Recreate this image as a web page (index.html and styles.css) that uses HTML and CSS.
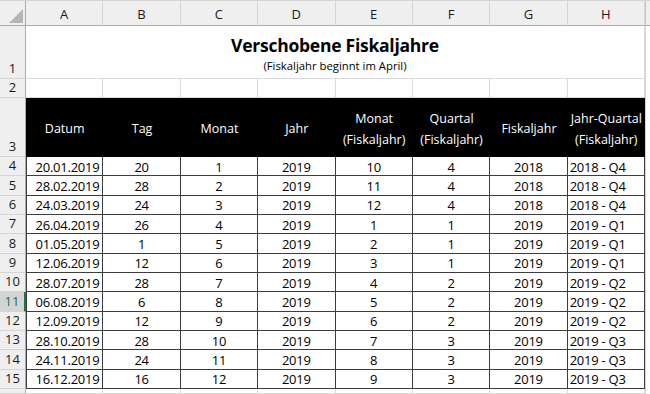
FILE: index.html
```html
<!DOCTYPE html>
<html lang="de">
<head>
<meta charset="utf-8">
<title>Verschobene Fiskaljahre</title>
<link rel="stylesheet" href="styles.css">
</head>
<body>
<div class="sheet">
  <div class="ch corner"><span class="tri"></span></div>
  <div class="ch">A</div><div class="ch">B</div><div class="ch">C</div><div class="ch">D</div>
  <div class="ch">E</div><div class="ch">F</div><div class="ch">G</div><div class="ch">H</div>
  <div class="ch fill"></div>

  <div class="rh">1</div>
  <div class="c title-cell">
    <div class="title">Verschobene Fiskaljahre</div>
    <div class="subtitle">(Fiskaljahr beginnt im April)</div>
  </div>
  <div class="fill"></div>

  <div class="rh">2</div>
  <div class="c"></div><div class="c"></div><div class="c"></div><div class="c"></div>
  <div class="c"></div><div class="c"></div><div class="c"></div><div class="c"></div>
  <div class="fill"></div>

  <div class="rh">3</div>
  <div class="h">Datum</div>
  <div class="h">Tag</div>
  <div class="h">Monat</div>
  <div class="h">Jahr</div>
  <div class="h">Monat<br>(Fiskaljahr)</div>
  <div class="h">Quartal<br>(Fiskaljahr)</div>
  <div class="h">Fiskaljahr</div>
  <div class="h">Jahr-Quartal<br>(Fiskaljahr)</div>
  <div class="fill"></div>

  <div class="rh">4</div><div class="d da">20.01.2019</div><div class="d">20</div><div class="d">1</div><div class="d">2019</div><div class="d">10</div><div class="d">4</div><div class="d">2018</div><div class="d dh">2018 - Q4</div><div class="fill"></div>
  <div class="rh">5</div><div class="d da">28.02.2019</div><div class="d">28</div><div class="d">2</div><div class="d">2019</div><div class="d">11</div><div class="d">4</div><div class="d">2018</div><div class="d dh">2018 - Q4</div><div class="fill"></div>
  <div class="rh">6</div><div class="d da">24.03.2019</div><div class="d">24</div><div class="d">3</div><div class="d">2019</div><div class="d">12</div><div class="d">4</div><div class="d">2018</div><div class="d dh">2018 - Q4</div><div class="fill"></div>
  <div class="rh">7</div><div class="d da">26.04.2019</div><div class="d">26</div><div class="d">4</div><div class="d">2019</div><div class="d">1</div><div class="d">1</div><div class="d">2019</div><div class="d dh">2019 - Q1</div><div class="fill"></div>
  <div class="rh">8</div><div class="d da">01.05.2019</div><div class="d">1</div><div class="d">5</div><div class="d">2019</div><div class="d">2</div><div class="d">1</div><div class="d">2019</div><div class="d dh">2019 - Q1</div><div class="fill"></div>
  <div class="rh">9</div><div class="d da">12.06.2019</div><div class="d">12</div><div class="d">6</div><div class="d">2019</div><div class="d">3</div><div class="d">1</div><div class="d">2019</div><div class="d dh">2019 - Q1</div><div class="fill"></div>
  <div class="rh">10</div><div class="d da">28.07.2019</div><div class="d">28</div><div class="d">7</div><div class="d">2019</div><div class="d">4</div><div class="d">2</div><div class="d">2019</div><div class="d dh">2019 - Q2</div><div class="fill"></div>
  <div class="rh sel">11</div><div class="d da">06.08.2019</div><div class="d">6</div><div class="d">8</div><div class="d">2019</div><div class="d">5</div><div class="d">2</div><div class="d">2019</div><div class="d dh">2019 - Q2</div><div class="fill"></div>
  <div class="rh">12</div><div class="d da">12.09.2019</div><div class="d">12</div><div class="d">9</div><div class="d">2019</div><div class="d">6</div><div class="d">2</div><div class="d">2019</div><div class="d dh">2019 - Q2</div><div class="fill"></div>
  <div class="rh">13</div><div class="d da">28.10.2019</div><div class="d">28</div><div class="d">10</div><div class="d">2019</div><div class="d">7</div><div class="d">3</div><div class="d">2019</div><div class="d dh">2019 - Q3</div><div class="fill"></div>
  <div class="rh">14</div><div class="d da">24.11.2019</div><div class="d">24</div><div class="d">11</div><div class="d">2019</div><div class="d">8</div><div class="d">3</div><div class="d">2019</div><div class="d dh">2019 - Q3</div><div class="fill"></div>
  <div class="rh">15</div><div class="d da">16.12.2019</div><div class="d">16</div><div class="d">12</div><div class="d">2019</div><div class="d">9</div><div class="d">3</div><div class="d">2019</div><div class="d dh">2019 - Q3</div><div class="fill"></div>

  <div class="rh"></div>
  <div class="c"></div><div class="c"></div><div class="c"></div><div class="c"></div>
  <div class="c"></div><div class="c"></div><div class="c"></div><div class="c"></div>
  <div class="fill"></div>
</div>
</body>
</html>
```

FILE: styles.css
```css
* { box-sizing: border-box; }

html, body {
  margin: 0;
  padding: 0;
  background: #ffffff;
}

body {
  font-family: "Open Sans", "Liberation Sans", sans-serif;
  color: #000;
  width: 650px;
  height: 394px;
  overflow: hidden;
}

.sheet {
  display: grid;
  grid-template-columns: 26px repeat(8, 77.375px) 5px;
  grid-template-rows: 25px 53px 19px 59px repeat(12, 19.333px) 1fr;
  width: 650px;
  height: 394px;
  border-top: 1px solid #d4d4d4;
}

/* column headers */
.ch {
  background: #efefef;
  border-right: 1px solid #d6d6d6;
  border-bottom: 1px solid #ababab;
  font-size: 13px;
  color: #1a1a1a;
  display: flex;
  align-items: center;
  justify-content: center;
  padding-top: 1px;
}

.corner {
  position: relative;
  border-right: 1px solid #ababab;
}

.tri {
  position: absolute;
  right: 2px;
  bottom: 2px;
  width: 0;
  height: 0;
  border-style: solid;
  border-width: 0 0 14px 14px;
  border-color: transparent transparent #b5b5b5 transparent;
}

.ch.fill {
  border-right: none;
  border-left: 1px solid #c8c8c8;
}

/* row headers */
.rh {
  background: #efefef;
  border-right: 1px solid #ababab;
  border-bottom: 1px solid #d6d6d6;
  font-size: 13px;
  color: #1a1a1a;
  display: flex;
  align-items: flex-end;
  justify-content: center;
  padding-bottom: 1px;
  line-height: 17px;
}

.rh.sel {
  background: #d4d4d4;
  color: #217346;
  border-right: 2px solid #217346;
}

/* plain cells */
.c {
  border-right: 1px solid #dadada;
  border-bottom: 1px solid #dadada;
}

.fill {
  border-left: 1px solid #d6d6d6;
}

.title-cell {
  grid-column: span 8;
  display: flex;
  flex-direction: column;
  align-items: center;
  padding-top: 7px;
}

.title {
  font-weight: 700;
  font-size: 17.5px;
  line-height: 24px;
  letter-spacing: -0.25px;
}

.subtitle {
  font-size: 11.3px;
  line-height: 16px;
  margin-top: 1px;
}

/* black header row */
.h {
  background: #000;
  color: #fff;
  font-size: 12.5px;
  line-height: 21px;
  text-align: center;
  display: flex;
  align-items: center;
  justify-content: center;
  padding-top: 2px;
}

/* data cells */
.d {
  border-right: 1px solid #3d3d3d;
  border-bottom: 1px solid #3d3d3d;
  font-size: 13px;
  line-height: 18px;
  letter-spacing: -0.25px;
  display: flex;
  align-items: center;
  justify-content: center;
  padding-top: 1px;
}

.d.da {
  justify-content: flex-end;
  padding-right: 3px;
  border-left: 1px solid #3d3d3d;
}

.d.dh {
  justify-content: flex-start;
  padding-left: 2px;
}
```
